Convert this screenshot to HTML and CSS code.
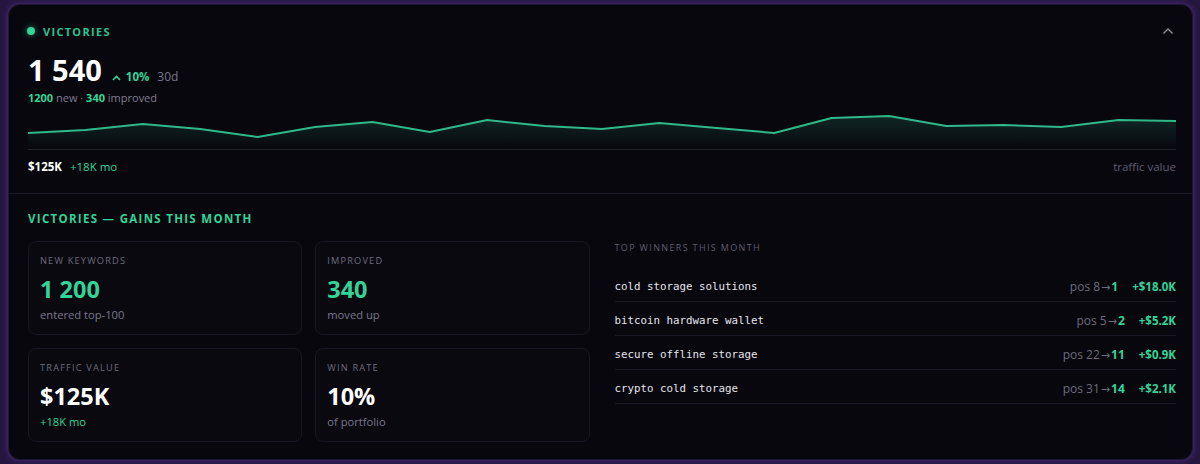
FILE: index.html
```html
<!DOCTYPE html>
<html lang="en">

<head>
    <meta charset="UTF-8">
    <meta name="viewport" content="width=device-width, initial-scale=1.0">
    <title>Victories</title>
    <link rel="stylesheet" href="styles.css">
</head>

<body>
    <div class="panel">
        <section class="summary">
            <div class="panel-head">
                <span class="dot"></span>
                <span class="panel-title">VICTORIES</span>
                <svg class="collapse" width="12" height="8" viewBox="0 0 12 8">
                    <polyline points="1.5,6.5 6,2 10.5,6.5" fill="none" stroke="#8d8a9a" stroke-width="1.4" />
                </svg>
            </div>

            <div class="total">
                <span class="total-num">1 540</span>
                <span class="delta">
                    <svg width="9" height="6" viewBox="0 0 9 6">
                        <polyline points="1,5 4.5,1.5 8,5" fill="none" stroke="#34d399" stroke-width="1.6" />
                    </svg>
                    10%
                </span>
                <span class="period">30d</span>
            </div>
            <div class="breakdown"><b>1200</b> new · <b>340</b> improved</div>

            <div class="spark">
                <svg viewBox="0 0 1148 38" preserveAspectRatio="none">
                    <defs>
                        <linearGradient id="sparkFill" x1="0" y1="0" x2="0" y2="1">
                            <stop offset="0" stop-color="#34d399" stop-opacity="0.16" />
                            <stop offset="1" stop-color="#34d399" stop-opacity="0" />
                        </linearGradient>
                    </defs>
                    <polygon fill="url(#sparkFill)"
                        points="0,22 57.4,19 114.8,13 172.2,18 229.6,26 287,16 344.4,11 401.8,21 459.2,9 516.6,15 574,18 631.4,12 688.8,17 746.2,22 803.6,7 861,5 918.4,15 975.8,14 1033.2,16 1090.6,9 1148,10 1148,38 0,38" />
                    <polyline fill="none" stroke="#2fb889" stroke-width="2" stroke-linejoin="round"
                        points="0,22 57.4,19 114.8,13 172.2,18 229.6,26 287,16 344.4,11 401.8,21 459.2,9 516.6,15 574,18 631.4,12 688.8,17 746.2,22 803.6,7 861,5 918.4,15 975.8,14 1033.2,16 1090.6,9 1148,10" />
                </svg>
            </div>

            <div class="spark-foot">
                <span class="money">$125K</span>
                <span class="money-delta">+18K mo</span>
                <span class="spark-label">traffic value</span>
            </div>
        </section>

        <section class="gains">
            <h3 class="gains-title">VICTORIES — GAINS THIS MONTH</h3>

            <div class="gains-grid">
                <div class="stat-grid">
                    <div class="stat">
                        <div class="stat-label">NEW KEYWORDS</div>
                        <div class="stat-value green">1 200</div>
                        <div class="stat-sub">entered top-100</div>
                    </div>
                    <div class="stat">
                        <div class="stat-label">IMPROVED</div>
                        <div class="stat-value green">340</div>
                        <div class="stat-sub">moved up</div>
                    </div>
                    <div class="stat">
                        <div class="stat-label">TRAFFIC VALUE</div>
                        <div class="stat-value">$125K</div>
                        <div class="stat-sub green">+18K mo</div>
                    </div>
                    <div class="stat">
                        <div class="stat-label">WIN RATE</div>
                        <div class="stat-value">10%</div>
                        <div class="stat-sub">of portfolio</div>
                    </div>
                </div>

                <div class="winners">
                    <div class="winners-title">TOP WINNERS THIS MONTH</div>
                    <div class="winner">
                        <span class="kw">cold storage solutions</span>
                        <span class="pos">pos 8<i>→</i><b>1</b></span>
                        <span class="gain">+$18.0K</span>
                    </div>
                    <div class="winner">
                        <span class="kw">bitcoin hardware wallet</span>
                        <span class="pos">pos 5<i>→</i><b>2</b></span>
                        <span class="gain">+$5.2K</span>
                    </div>
                    <div class="winner">
                        <span class="kw">secure offline storage</span>
                        <span class="pos">pos 22<i>→</i><b>11</b></span>
                        <span class="gain">+$0.9K</span>
                    </div>
                    <div class="winner">
                        <span class="kw">crypto cold storage</span>
                        <span class="pos">pos 31<i>→</i><b>14</b></span>
                        <span class="gain">+$2.1K</span>
                    </div>
                </div>
            </div>
        </section>
    </div>
</body>

</html>
```

FILE: styles.css
```css
* {
    box-sizing: border-box;
}

body {
    margin: 0;
    padding: 4px 7px 4px 8px;
    background-color: #25163f;
    font-family: "Open Sans", "Liberation Sans", sans-serif;
    color: #f1f0f5;
}

.panel {
    background-color: #08070e;
    border: 1px solid #1f1830;
    border-radius: 12px;
    box-shadow: 0 0 6px rgba(130, 80, 210, 0.45);
    overflow: hidden;
}

.green {
    color: #34d399;
}

/* summary */

.summary {
    padding: 19px 16px 18px 19px;
    border-bottom: 1px solid #1b1926;
}

.panel-head {
    display: flex;
    align-items: center;
    height: 14px;
}

.dot {
    width: 8px;
    height: 8px;
    border-radius: 50%;
    background-color: #34d399;
    box-shadow: 0 0 6px rgba(52, 211, 153, 0.6);
    margin-right: 8px;
    margin-left: -1px;
}

.panel-title {
    font-size: 11px;
    font-weight: 700;
    letter-spacing: 1.3px;
    color: #2fc08d;
}

.collapse {
    margin-left: auto;
    margin-right: 2px;
}

.total {
    display: flex;
    align-items: baseline;
    margin-top: 14px;
    height: 36px;
    line-height: 36px;
}

.total-num {
    font-size: 29px;
    font-weight: 700;
    color: #fff;
}

.delta {
    margin-left: 10px;
    font-size: 11.5px;
    font-weight: 700;
    color: #34d399;
}

.delta svg {
    margin-right: 2px;
}

.period {
    margin-left: 8px;
    font-size: 12px;
    color: #77748a;
}

.breakdown {
    margin-top: 2px;
    font-size: 11px;
    line-height: 16px;
    color: #807d8e;
}

.breakdown b {
    color: #34d399;
    font-weight: 700;
}

.spark {
    margin-top: 5px;
    border-bottom: 1px solid #22202d;
}

.spark svg {
    display: block;
    width: 100%;
    height: 38px;
}

.spark-foot {
    display: flex;
    align-items: center;
    margin-top: 9px;
    line-height: 16px;
    font-size: 11.5px;
}

.money {
    font-weight: 700;
    color: #fff;
}

.money-delta {
    margin-left: 8px;
    color: #34d399;
}

.spark-label {
    margin-left: auto;
    color: #5f5c6e;
}

/* gains */

.gains {
    padding: 18px 16px 17px 19px;
}

.gains-title {
    margin: 0;
    font-size: 11.5px;
    line-height: 14px;
    font-weight: 700;
    letter-spacing: 1.3px;
    color: #34d399;
}

.gains-grid {
    display: grid;
    grid-template-columns: 1fr 1fr;
    gap: 25px;
    margin-top: 15px;
}

.stat-grid {
    display: grid;
    grid-template-columns: 1fr 1fr;
    grid-auto-rows: 94px;
    gap: 13px;
}

.stat {
    background-color: #0a0910;
    border: 1px solid #181622;
    border-radius: 8px;
    padding: 13px 12px 0 11px;
}

.stat-label {
    font-size: 9.2px;
    line-height: 12px;
    letter-spacing: 1.2px;
    color: #6e6b7c;
}

.stat-value {
    margin-top: 8px;
    font-size: 23.5px;
    line-height: 28px;
    font-weight: 700;
    color: #fff;
}

.stat-value.green {
    color: #34d399;
}

.stat-sub {
    margin-top: 4px;
    font-size: 11.2px;
    line-height: 16px;
    color: #7a778a;
}

.stat-sub.green {
    color: #34d399;
}

.winners {
    padding-top: 1px;
}

.winners-title {
    font-size: 9px;
    line-height: 12px;
    letter-spacing: 1.35px;
    color: #5f5c6d;
}

.winners-title + .winner {
    margin-top: 14px;
}

.winner {
    display: flex;
    align-items: center;
    height: 34px;
    padding: 11px 0 6px 0;
    line-height: 16px;
    border-bottom: 1px solid #1a1824;
}

.kw {
    font-family: "DejaVu Sans Mono", "Liberation Mono", monospace;
    font-size: 10.8px;
    color: #e6e5ec;
}

.pos {
    margin-left: auto;
    font-size: 12px;
    color: #6e6b7c;
}

.pos i {
    font-style: normal;
    font-family: "DejaVu Sans", sans-serif;
    font-size: 11px;
    line-height: 1;
    margin: 0 1px;
}

.pos b {
    color: #34d399;
    font-weight: 700;
}

.gain {
    margin-left: 14px;
    font-size: 11.5px;
    font-weight: 700;
    color: #34d399;
}
```
